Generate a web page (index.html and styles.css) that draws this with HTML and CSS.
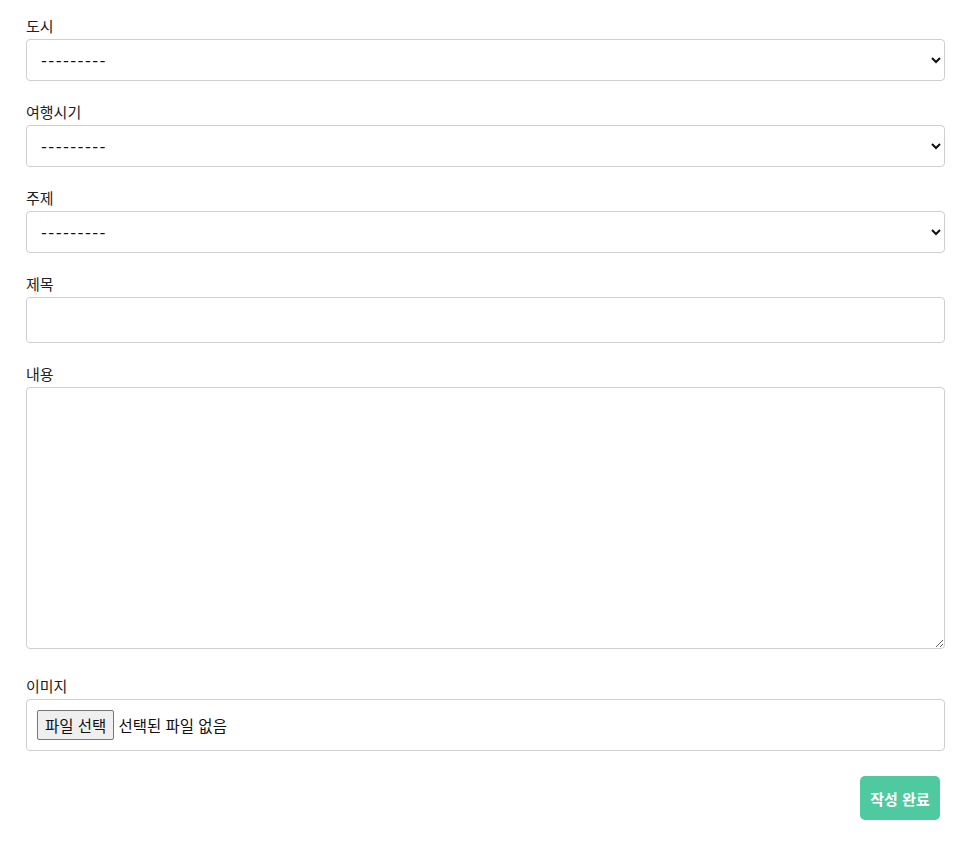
FILE: index.html
```
<!DOCTYPE html>
<html lang="ko">
<head>
<meta charset="utf-8">
<link rel="stylesheet" href="styles.css">
</head>
<body>
<form class="form">
  <div class="group">
    <label class="label">도시</label>
    <select class="control select"><option>---------</option></select>
  </div>
  <div class="group">
    <label class="label">여행시기</label>
    <select class="control select"><option>---------</option></select>
  </div>
  <div class="group">
    <label class="label">주제</label>
    <select class="control select"><option>---------</option></select>
  </div>
  <div class="group">
    <label class="label">제목</label>
    <input class="control input" type="text">
  </div>
  <div class="group">
    <label class="label">내용</label>
    <textarea class="control textarea"></textarea>
  </div>
  <div class="group">
    <label class="label">이미지</label>
    <div class="control file">
      <button type="button" class="file-btn">파일 선택</button>
      <span class="file-text">선택된 파일 없음</span>
    </div>
  </div>
  <div class="actions">
    <button type="button" class="submit">작성 완료</button>
  </div>
</form>
</body>
</html>
```
FILE: styles.css
```
html, body {
  margin: 0;
  padding: 0;
  background: #fff;
}
body {
  font-family: "Noto Sans CJK KR", "Noto Sans", sans-serif;
  color: #212529;
}
.form {
  padding: 15px 27px 0 26px;
}
.group {
  margin-bottom: 20px;
}
.group:nth-child(5) {
  margin-bottom: 26px;
}
.label {
  display: block;
  font-size: 15px;
  line-height: 22px;
  margin-bottom: 2px;
  color: #222;
}
.control {
  display: block;
  width: 100%;
  box-sizing: border-box;
  border: 1px solid #cfcfcf;
  border-radius: 4px;
  background: #fff;
  font-family: "Noto Sans CJK KR", "Noto Sans", sans-serif;
  font-size: 17px;
  color: #111;
}
.select {
  height: 42px;
  padding: 0 10px 0 10px;
  letter-spacing: 1.4px;
}
.input {
  height: 46px;
  padding: 0 14px;
}
.textarea {
  height: 262px;
  resize: vertical;
}
.file {
  height: 52px;
  padding: 0 10px;
  display: flex;
  align-items: center;
  gap: 4px;
}
.file-btn {
  height: 30px;
  padding: 0 7px;
  font-family: "Noto Sans CJK KR", sans-serif;
  font-size: 15.5px;
  color: #111;
  background: #efefef;
  border: 1px solid #767676;
  border-radius: 2px;
}
.file-text {
  font-size: 15.5px;
  color: #111;
}
.actions {
  display: flex;
  justify-content: flex-end;
  padding-right: 5px;
  padding-top: 5px;
}
.submit {
  width: 80px;
  height: 44px;
  border: none;
  border-radius: 5px;
  background: #4fc9a0;
  color: #fff;
  font-family: "Noto Sans CJK KR", sans-serif;
  font-size: 15px;
  font-weight: 700;
  padding: 0;
}
```
